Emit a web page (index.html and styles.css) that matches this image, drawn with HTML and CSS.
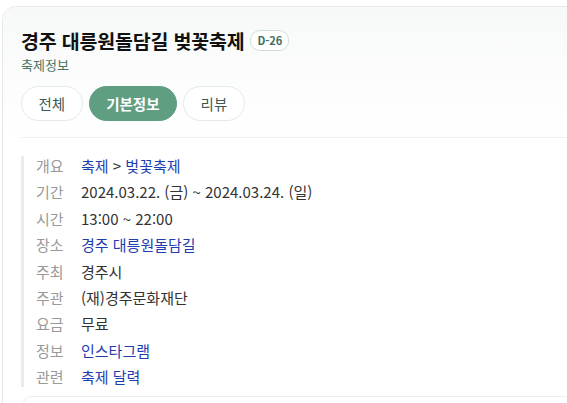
FILE: index.html
```html
<!DOCTYPE html>
<html lang="ko">
<head>
<meta charset="utf-8">
<link rel="stylesheet" href="styles.css">
</head>
<body>
<div class="card">
  <div class="head">
    <div class="title-row">
      <h1 class="title">경주 대릉원돌담길 벚꽃축제</h1>
      <span class="dday">D-26</span>
    </div>
    <div class="sub">축제정보</div>
    <div class="tabs">
      <span class="tab">전체</span>
      <span class="tab active">기본정보</span>
      <span class="tab">리뷰</span>
    </div>
  </div>
  <div class="body">
    <dl class="info">
      <div class="row"><dt>개요</dt><dd><a class="link">축제</a> &gt; <a class="link">벚꽃축제</a></dd></div>
      <div class="row"><dt>기간</dt><dd>2024.03.22. (금) ~ 2024.03.24. (일)</dd></div>
      <div class="row"><dt>시간</dt><dd>13:00 ~ 22:00</dd></div>
      <div class="row"><dt>장소</dt><dd><a class="link">경주 대릉원돌담길</a></dd></div>
      <div class="row"><dt>주최</dt><dd>경주시</dd></div>
      <div class="row"><dt>주관</dt><dd>(재)경주문화재단</dd></div>
      <div class="row"><dt>요금</dt><dd>무료</dd></div>
      <div class="row"><dt>정보</dt><dd><a class="link">인스타그램</a></dd></div>
      <div class="row"><dt>관련</dt><dd><a class="link">축제 달력</a></dd></div>
    </dl>
    <div class="next"></div>
  </div>
</div>
</body>
</html>
```
FILE: styles.css
```css
html, body {
  margin: 0;
  padding: 0;
  background: #ffffff;
  overflow: hidden;
  font-family: "Noto Sans CJK KR", "Noto Sans", sans-serif;
}
.card {
  margin: 6px 0 0 2px;
  width: 620px;
  border: 1px solid #e6e8e8;
  border-radius: 14px;
  background: #fff;
  overflow: hidden;
  height: 420px;
}
.head {
  padding: 19px 0 0 18px;
  background: linear-gradient(#f7f9f8, #ffffff);
}
.title-row {
  display: flex;
  align-items: center;
  gap: 6px;
  height: 28px;
}
.title {
  margin: 0;
  font-size: 19.5px;
  font-weight: 700;
  color: #111;
  letter-spacing: -0.2px;
}
.dday {
  font-size: 11px;
  font-weight: 700;
  color: #3e6e60;
  border: 1px solid #cfddd8;
  border-radius: 10px;
  padding: 0 6px;
  height: 19px;
  line-height: 18px;
  background: #fff;
}
.sub {
  margin-top: 2px;
  font-size: 13px;
  color: #4a7565;
  line-height: 18px;
}
.tabs {
  display: flex;
  gap: 6px;
  margin-top: 12px;
  padding-bottom: 16px;
  border-bottom: 1px solid #eef0f0;
}
.tab {
  display: flex;
  align-items: center;
  justify-content: center;
  height: 33px;
  border: 1px solid #e2ebe8;
  border-radius: 18px;
  background: #fff;
  font-size: 14.5px;
  color: #3d5a50;
  padding: 0 16.5px;
}
.tab.active {
  background: #5f9e80;
  border-color: #5f9e80;
  color: #fff;
  font-weight: 700;
}
.body {
  padding: 18px 0 0 18px;
}
.info {
  margin: 0;
  border-left: 3px solid #e9ecec;
  padding: 0 0 0 12px;
  display: flex;
  flex-direction: column;
  gap: 6.4px;
}
.row {
  display: flex;
  height: 20px;
  line-height: 20px;
  align-items: center;
  font-size: 15px;
}
.row dt {
  width: 45px;
  color: #999;
}
.row dd {
  margin: 0;
  color: #333;
}
.link {
  color: #1f3dae;
  text-decoration: none;
}
.next {
  margin-top: 9px;
  margin-left: 1px;
  height: 40px;
  border: 1px solid #eceeee;
  border-radius: 10px;
}
```
